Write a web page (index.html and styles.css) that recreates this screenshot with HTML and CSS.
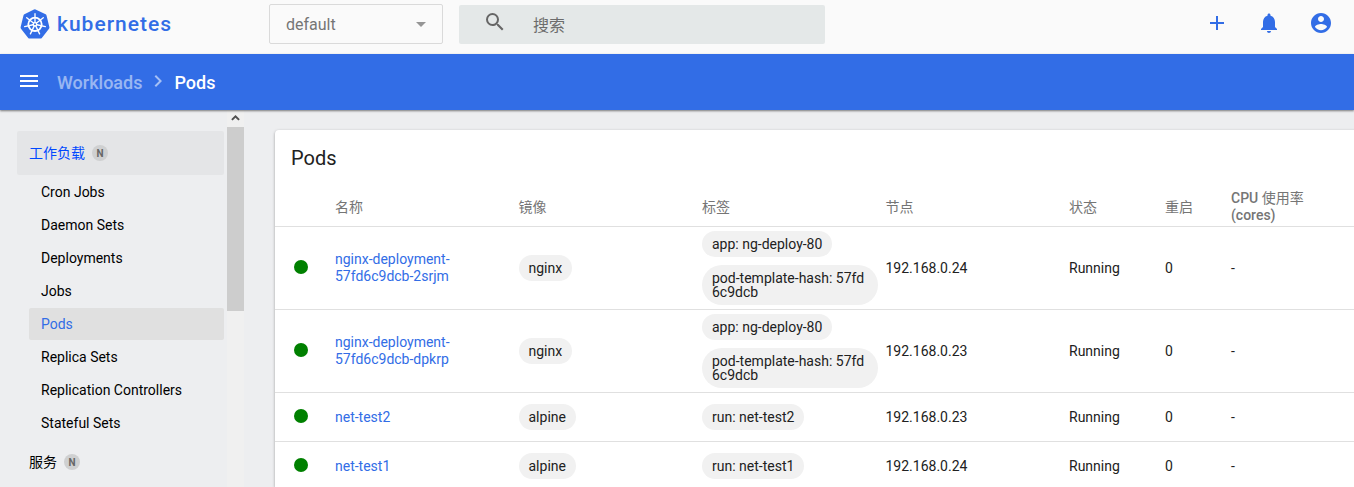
FILE: index.html
```html
<!DOCTYPE html>
<html lang="zh-CN">
<head>
<meta charset="utf-8">
<title>Kubernetes Dashboard</title>
<link rel="stylesheet" href="styles.css">
</head>
<body>
<header class="topbar">
  <svg class="logo" width="30" height="32" viewBox="0 0 30 32">
    <path d="M15 1.2 L25.6 6.3 Q26.4 6.8 26.6 7.7 L29.4 19.2 Q29.5 20 29 20.7 L21.8 30 Q21.2 30.6 20.4 30.6 H9.6 Q8.8 30.6 8.2 30 L1 20.7 Q.5 20 .6 19.2 L3.4 7.7 Q3.6 6.8 4.4 6.3 L14 1.5 Q15 1 16 1.5z" fill="#326de6"/>
    <g transform="translate(15 16.3)" fill="none" stroke="#fff" stroke-width="1.35" stroke-linecap="round">
      <circle r="6.7" stroke-width="1.8"/>
      <path d="M0-2V-10.6"/>
      <path d="M0-2V-10.6" transform="rotate(51.43)"/>
      <path d="M0-2V-10.6" transform="rotate(102.86)"/>
      <path d="M0-2V-10.6" transform="rotate(154.29)"/>
      <path d="M0-2V-10.6" transform="rotate(205.71)"/>
      <path d="M0-2V-10.6" transform="rotate(257.14)"/>
      <path d="M0-2V-10.6" transform="rotate(308.57)"/>
      <circle r="1.7" stroke-width="1.4"/>
    </g>
  </svg>
  <svg class="wordmark" width="116" height="30" viewBox="0 0 116 30"><text x="0" y="21" textLength="114" lengthAdjust="spacing">kubernetes</text></svg>
  <div class="namespace"><span>default</span><i class="caret"></i></div>
  <div class="search">
    <svg width="24" height="24" viewBox="0 0 24 24"><path fill="#666" d="M15.5 14h-.79l-.28-.27A6.47 6.47 0 0 0 16 9.5 6.5 6.5 0 1 0 9.5 16c1.61 0 3.09-.59 4.23-1.57l.27.28v.79l5 4.99L20.49 19l-4.99-5zm-6 0a4.5 4.5 0 1 1 0-9 4.5 4.5 0 0 1 0 9z"/></svg>
    <span>搜索</span>
  </div>
  <div class="actions">
    <svg width="24" height="24" viewBox="0 0 24 24"><path d="M19 13h-6v6h-2v-6H5v-2h6V5h2v6h6v2z"/></svg>
    <svg width="24" height="24" viewBox="0 0 24 24"><path d="M12 22c1.1 0 2-.9 2-2h-4c0 1.1.89 2 2 2zm6-6v-5c0-3.07-1.64-5.64-4.5-6.32V4c0-.83-.67-1.5-1.5-1.5s-1.5.67-1.5 1.5v.68C7.63 5.36 6 7.92 6 11v5l-2 2v1h16v-1l-2-2z"/></svg>
    <svg width="24" height="24" viewBox="0 0 24 24"><path d="M12 2C6.48 2 2 6.48 2 12s4.48 10 10 10 10-4.48 10-10S17.52 2 12 2zm0 3c1.66 0 3 1.34 3 3s-1.34 3-3 3-3-1.34-3-3 1.34-3 3-3zm0 14.2c-2.5 0-4.71-1.28-6-3.22.03-1.99 4-3.08 6-3.08 1.99 0 5.97 1.09 6 3.08-1.29 1.94-3.5 3.22-6 3.22z"/></svg>
  </div>
</header>
<div class="crumbs">
  <svg class="menu" width="24" height="24" viewBox="0 0 24 24"><path fill="#fff" d="M3 18h18v-2H3v2zm0-5h18v-2H3v2zm0-7v2h18V6H3z"/></svg>
  <span class="parent">Workloads</span>
  <svg class="chevron" width="24" height="24" viewBox="0 0 24 24"><path d="M8.59 16.59 13.17 12 8.59 7.41 10 6l6 6-6 6-1.41-1.41z"/></svg>
  <span class="current">Pods</span>
</div>
<div class="body">
  <nav class="sidebar">
    <div class="group active"><span>工作负载</span><b class="badge">N</b></div>
    <a class="item">Cron Jobs</a>
    <a class="item">Daemon Sets</a>
    <a class="item">Deployments</a>
    <a class="item">Jobs</a>
    <a class="item selected">Pods</a>
    <a class="item">Replica Sets</a>
    <a class="item">Replication Controllers</a>
    <a class="item">Stateful Sets</a>
    <div class="group"><span>服务</span><b class="badge">N</b></div>
  </nav>
  <div class="scrollbar">
    <svg width="17" height="17" viewBox="0 0 17 17"><path d="M4.9 9.9 8.5 6.3l3.6 3.6" fill="none" stroke="#505050" stroke-width="2"/></svg>
    <div class="thumb"></div>
  </div>
  <main class="card">
    <h1>Pods</h1>
    <div class="row head">
      <span></span><span>名称</span><span>镜像</span><span>标签</span><span>节点</span><span>状态</span><span>重启</span><span class="cpu">CPU <em>使用率</em><br>(cores)</span>
    </div>
    <div class="row tall">
      <i class="dot"></i><a>nginx-deployment-<br>57fd6c9dcb-2srjm</a><span><b class="chip">nginx</b></span>
      <span class="labels"><b class="chip">app: ng-deploy-80</b><b class="chip">pod-template-hash: 57fd<br>6c9dcb</b></span>
      <span>192.168.0.24</span><span>Running</span><span>0</span><span>-</span>
    </div>
    <div class="row tall">
      <i class="dot"></i><a>nginx-deployment-<br>57fd6c9dcb-dpkrp</a><span><b class="chip">nginx</b></span>
      <span class="labels"><b class="chip">app: ng-deploy-80</b><b class="chip">pod-template-hash: 57fd<br>6c9dcb</b></span>
      <span>192.168.0.23</span><span>Running</span><span>0</span><span>-</span>
    </div>
    <div class="row">
      <i class="dot"></i><a>net-test2</a><span><b class="chip">alpine</b></span>
      <span class="labels"><b class="chip">run: net-test2</b></span>
      <span>192.168.0.23</span><span>Running</span><span>0</span><span>-</span>
    </div>
    <div class="row">
      <i class="dot"></i><a>net-test1</a><span><b class="chip">alpine</b></span>
      <span class="labels"><b class="chip">run: net-test1</b></span>
      <span>192.168.0.24</span><span>Running</span><span>0</span><span>-</span>
    </div>
  </main>
</div>
</body>
</html>
```
FILE: styles.css
```css
* { box-sizing: border-box; }
body {
  margin: 0;
  height: 487px;
  overflow: hidden;
  display: flex;
  flex-direction: column;
  background: #edeef0;
  color: #212121;
  font: 14px/17px Roboto, "Noto Sans CJK SC", sans-serif;
}
svg { display: block; flex: none; }
i, em { font-style: normal; }

.topbar {
  height: 54px;
  flex: none;
  display: flex;
  background: #fafafa;
  padding-left: 20px;
}
.logo { margin-top: 8px; }
.wordmark { margin: 10px 0 0 7px; overflow: visible; }
.wordmark text { font: 500 21px Roboto, sans-serif; fill: #326de6; }
.namespace {
  width: 174px;
  height: 40px;
  margin: 4px 0 0 96px;
  padding: 0 16px;
  display: flex;
  align-items: center;
  justify-content: space-between;
  border: 1px solid #dadada;
  border-radius: 2px;
  font-size: 16px;
  color: #757575;
}
.caret {
  border: 5px solid transparent;
  border-top-color: #959595;
  border-bottom: 0;
}
.search {
  width: 366px;
  height: 39px;
  margin: 5px 0 0 16px;
  padding-left: 24px;
  display: flex;
  border-radius: 2px;
  background: #e4e8e8;
  color: #6c6c6c;
  font-size: 16px;
}
.search svg { margin-top: 5px; }
.search span { margin: 12px 0 0 26px; }
.actions {
  margin: 11px 21px 0 auto;
  display: flex;
  gap: 28px;
  fill: #326de6;
}

.crumbs {
  height: 56px;
  flex: none;
  padding-left: 17px;
  display: flex;
  align-items: center;
  background: #326de6;
  color: #fff;
  font-size: 18px;
  font-weight: 500;
  box-shadow: 0 1px 2px rgba(0, 0, 0, .5);
  z-index: 1;
}
.menu { margin-top: -3px; }
.parent { margin-left: 16px; opacity: .5; }
.chevron { margin: -3px 4px 0; fill: #a5c0f5; }

.body { flex: 1; min-height: 0; display: flex; }
.sidebar {
  width: 227px;
  flex: none;
  padding: 21px 3px 0 17px;
  color: #000;
}
.group {
  height: 44px;
  padding-left: 12px;
  display: flex;
  align-items: center;
  gap: 7px;
  border-radius: 2px;
}
.group.active { background: #e4e5e7; margin-bottom: 1px; }
.group.active span { color: #0048ff; }
.badge {
  width: 16px;
  height: 16px;
  border-radius: 50%;
  background: #cfd0d1;
  color: #666;
  font: bold 10px/17px Roboto, sans-serif;
  text-align: center;
}
.item {
  display: block;
  height: 32px;
  margin: 0 0 1px 12px;
  padding-left: 12px;
  line-height: 32px;
  border-radius: 2px;
}
.item.selected { background: #e0e0e0; color: #326de6; }
.scrollbar { width: 17px; flex: none; background: #f0f0f0; }
.thumb { height: 184px; background: #cdcdcd; }

.card {
  width: 1100px;
  flex: none;
  margin: 20px 0 0 31px;
  background: #fff;
  border-radius: 4px 0 0 0;
  box-shadow: 0 1px 3px rgba(0, 0, 0, .35);
}
h1 {
  margin: 0;
  height: 58px;
  padding: 16px 16px 0;
  font-size: 20px;
  font-weight: 400;
  line-height: 24px;
}
.row {
  height: 49px;
  padding-left: 19px;
  display: grid;
  grid-template-columns: 41px 183.5px 183.5px 183.5px 183.5px 96px 66px 1fr;
  align-items: center;
  border-bottom: 1px solid #e0e0e0;
}
.row.head { height: 39px; color: #757575; }
.row.tall { height: 83px; }
.row a { color: #326de6; }
.cpu { font-weight: 500; }
.cpu em { font-weight: 400; }
.dot {
  width: 14px;
  height: 14px;
  margin-top: -2px;
  border-radius: 50%;
  background: #008000;
}
.chip {
  display: inline-block;
  padding: 6px 10px;
  border-radius: 20px;
  background: #f1f1f1;
  font-weight: 400;
  line-height: 14px;
  white-space: nowrap;
}
.row > span > .chip { vertical-align: middle; }
.labels { display: flex; flex-direction: column; align-items: flex-start; gap: 8px; }
.labels .chip:nth-child(2) { width: 176px; }
```
